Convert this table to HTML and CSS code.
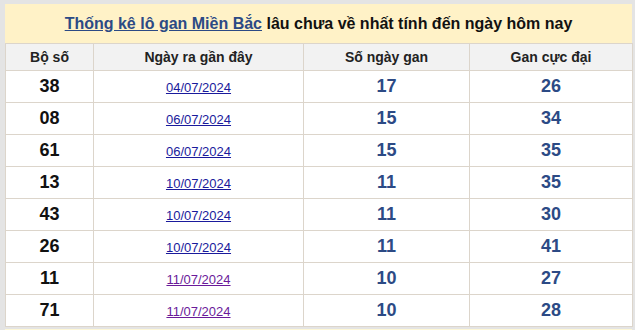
FILE: index.html
```html
<!DOCTYPE html>
<html lang="vi">
<head>
<meta charset="utf-8">
<link rel="stylesheet" href="styles.css">
</head>
<body>
<div class="page">
  <div class="box">
    <h2 class="title"><a class="title-link" href="#">Thống kê lô gan Miền Bắc</a> lâu chưa về nhất tính đến ngày hôm nay</h2>
    <table class="gan">
      <colgroup>
        <col class="c1"><col class="c2"><col class="c3"><col class="c4">
      </colgroup>
      <thead>
        <tr><th>Bộ số</th><th>Ngày ra gần đây</th><th>Số ngày gan</th><th>Gan cực đại</th></tr>
      </thead>
      <tbody>
        <tr><td class="num">38</td><td><a class="date" href="#">04/07/2024</a></td><td class="val">17</td><td class="val">26</td></tr>
        <tr><td class="num">08</td><td><a class="date" href="#">06/07/2024</a></td><td class="val">15</td><td class="val">34</td></tr>
        <tr><td class="num">61</td><td><a class="date" href="#">06/07/2024</a></td><td class="val">15</td><td class="val">35</td></tr>
        <tr><td class="num">13</td><td><a class="date" href="#">10/07/2024</a></td><td class="val">11</td><td class="val">35</td></tr>
        <tr><td class="num">43</td><td><a class="date" href="#">10/07/2024</a></td><td class="val">11</td><td class="val">30</td></tr>
        <tr><td class="num">26</td><td><a class="date" href="#">10/07/2024</a></td><td class="val">11</td><td class="val">41</td></tr>
        <tr><td class="num">11</td><td><a class="date visited" href="#">11/07/2024</a></td><td class="val">10</td><td class="val">27</td></tr>
        <tr><td class="num">71</td><td><a class="date visited" href="#">11/07/2024</a></td><td class="val">10</td><td class="val">28</td></tr>
      </tbody>
    </table>
  </div>
  <div class="next"></div>
</div>
</body>
</html>
```

FILE: styles.css
```css
html, body {
  margin: 0;
  padding: 0;
  background: #e4e4e4;
  font-family: "Liberation Sans", Arial, sans-serif;
  overflow: hidden;
}
.page {
  padding: 4px 3px 0 5px;
  width: 627px;
}
.box {
  background: #fff;
}
.title {
  margin: 0;
  height: 39px;
  line-height: 39px;
  background: #fff2c7;
  text-align: center;
  font-size: 16px;
  font-weight: bold;
  color: #111;
}
.title-link {
  color: #2c4a85;
  text-decoration: underline;
}
.gan {
  width: 627px;
  border-collapse: collapse;
  table-layout: fixed;
}
.c1 { width: 88px; }
.c2 { width: 210px; }
.c3 { width: 166px; }
.c4 { width: 163px; }
.gan th, .gan td {
  border: 1px solid #dcd5cb;
  text-align: center;
  padding: 0;
}
.gan th {
  height: 26px;
  background: #f2f2f2;
  font-size: 14px;
  font-weight: bold;
  color: #222;
}
.gan td {
  height: 31px;
  background: #fff;
}
.num {
  font-size: 18px;
  font-weight: bold;
  color: #111;
}
.val {
  font-size: 18px;
  font-weight: bold;
  color: #2c4a85;
}
.date {
  font-size: 13px;
  color: #1a1a9c;
  text-decoration: underline;
}
.date.visited {
  color: #6a1a9a;
}
.next {
  margin-top: 2px;
  height: 2px;
  background: #fdf7d6;
}
```
